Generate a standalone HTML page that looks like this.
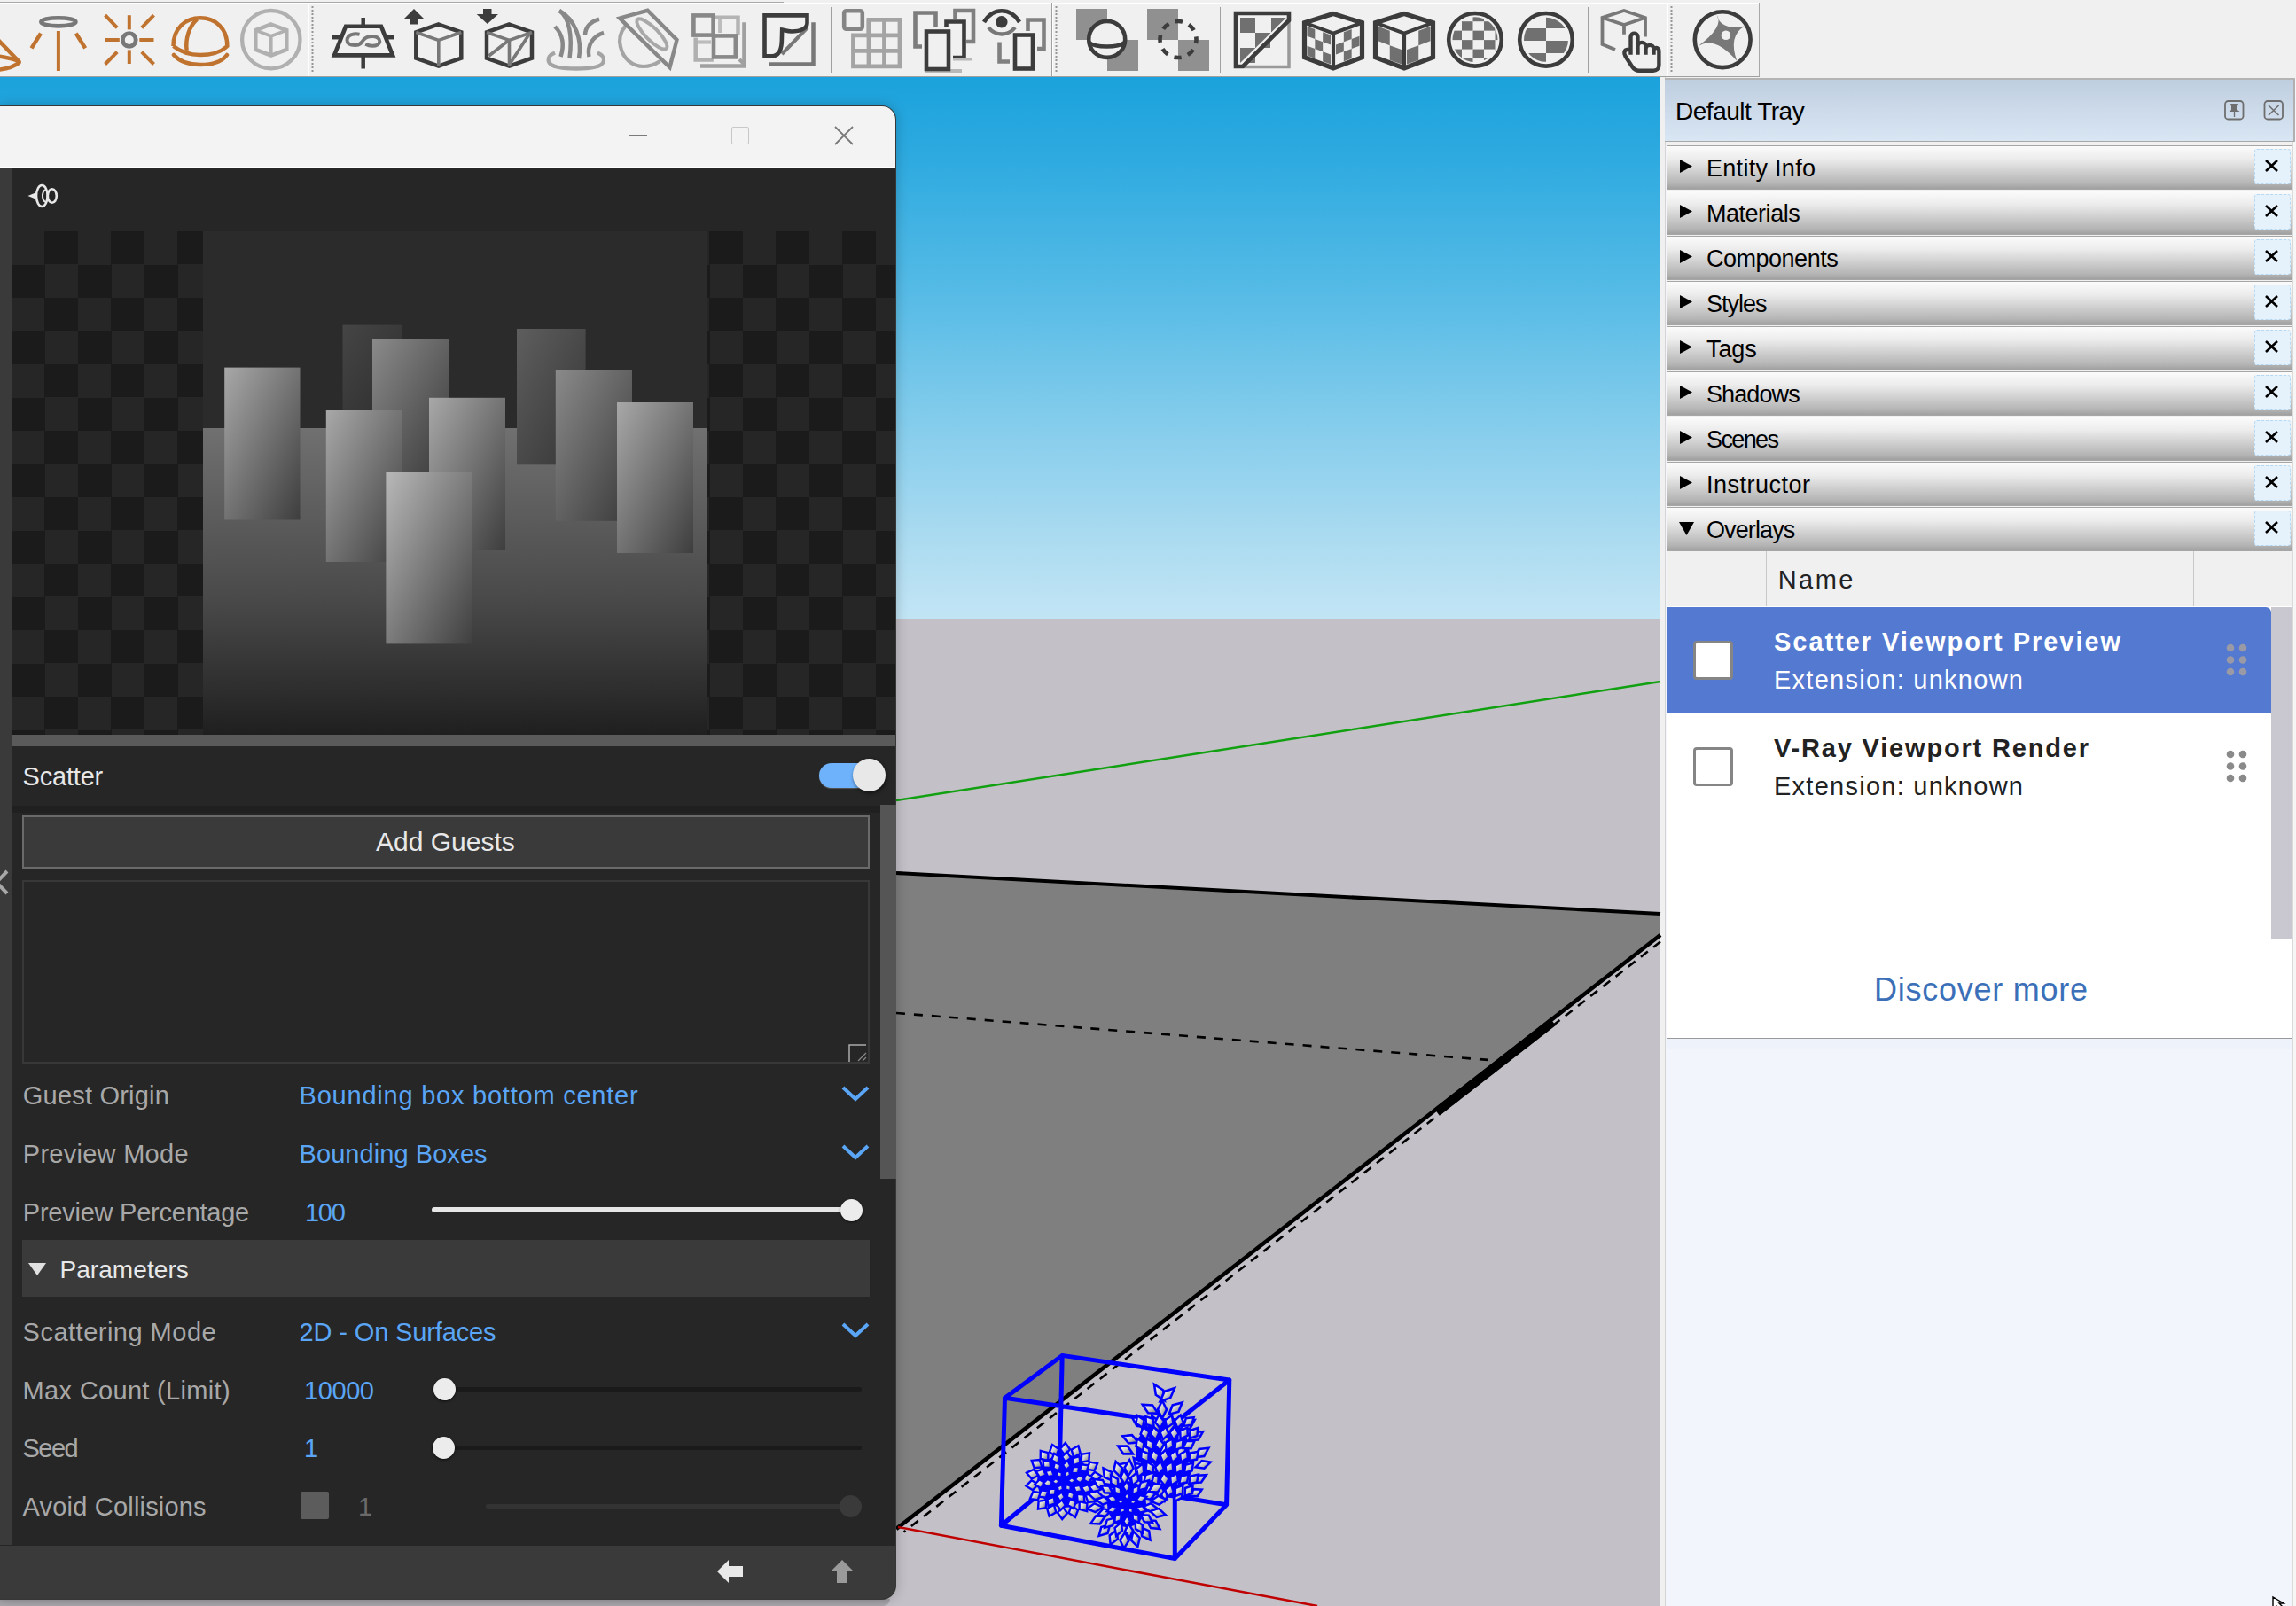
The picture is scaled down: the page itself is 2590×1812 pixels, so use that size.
<!DOCTYPE html><html><head><meta charset="utf-8"><style>
html,body{margin:0;padding:0}
body{width:2590px;height:1812px;overflow:hidden;position:relative;background:#c3c1c7;font-family:"Liberation Sans", sans-serif}
.a{position:absolute;box-sizing:border-box}
.t{position:absolute;white-space:pre;font-family:"Liberation Sans", sans-serif}
svg{position:absolute;overflow:visible}
</style></head><body>
<div class="a" style="left:0px;top:0px;width:2590px;height:87px;background:#f0f0f0"></div>
<svg style="left:0;top:0" width="2590" height="87" viewBox="0 0 2590 87"><rect x="0" y="2" width="884" height="1" fill="#a8a8a8"/><rect x="0" y="3" width="1985" height="1" fill="#ffffff"/><rect x="0" y="86" width="1985" height="1" fill="#a0a0a0"/><rect x="1984" y="3" width="1" height="83" fill="#a8a8a8"/><rect x="347" y="3" width="1" height="83" fill="#a0a0a0"/><rect x="348" y="3" width="1" height="83" fill="#ffffff"/><rect x="937" y="8" width="1" height="74" fill="#a0a0a0"/><rect x="1186" y="3" width="1" height="83" fill="#a0a0a0"/><rect x="1187" y="3" width="1" height="83" fill="#ffffff"/><rect x="1376" y="8" width="1" height="74" fill="#a0a0a0"/><rect x="1791" y="8" width="1" height="74" fill="#a0a0a0"/><rect x="1880" y="3" width="1" height="83" fill="#a0a0a0"/><rect x="1881" y="3" width="1" height="83" fill="#ffffff"/><line x1="352.5" y1="7" x2="352.5" y2="81" stroke="#959595" stroke-width="2" stroke-dasharray="2 2"/><line x1="1191.5" y1="7" x2="1191.5" y2="81" stroke="#959595" stroke-width="2" stroke-dasharray="2 2"/><line x1="1885.5" y1="7" x2="1885.5" y2="81" stroke="#959595" stroke-width="2" stroke-dasharray="2 2"/><line x1="-6" y1="41" x2="21" y2="69" stroke="#c0732f" stroke-width="4.5" stroke-linecap="butt"/><path d="M-4,63 Q26,68 21,71 Q14,77 -4,79" stroke="#c0732f" stroke-width="4.5" fill="none" stroke-linejoin="miter" /><ellipse cx="65.9" cy="24.8" rx="19.6" ry="4.6" stroke="#787878" stroke-width="4.6" fill="none"/><line x1="65.9" y1="35" x2="65.9" y2="80" stroke="#c0732f" stroke-width="4" stroke-linecap="butt"/><line x1="46" y1="37.6" x2="35.5" y2="54.4" stroke="#c0732f" stroke-width="4.5" stroke-linecap="butt"/><line x1="85.7" y1="37.6" x2="96.2" y2="54.4" stroke="#c0732f" stroke-width="4.5" stroke-linecap="butt"/><circle cx="145.8" cy="45" r="7.4" stroke="#787878" stroke-width="4.8" fill="none"/><line x1="145.8" y1="17.2" x2="145.8" y2="33.4" stroke="#c0732f" stroke-width="4" stroke-linecap="butt"/><line x1="145.8" y1="56.4" x2="145.8" y2="72" stroke="#c0732f" stroke-width="4" stroke-linecap="butt"/><line x1="118" y1="45" x2="134.8" y2="45" stroke="#c0732f" stroke-width="4" stroke-linecap="butt"/><line x1="157.3" y1="45" x2="173.5" y2="45" stroke="#c0732f" stroke-width="4" stroke-linecap="butt"/><line x1="118.6" y1="17.2" x2="132.2" y2="31.4" stroke="#c0732f" stroke-width="4" stroke-linecap="butt"/><line x1="173.5" y1="17.2" x2="159.8" y2="31.4" stroke="#c0732f" stroke-width="4" stroke-linecap="butt"/><line x1="118.6" y1="72.5" x2="132.2" y2="58.6" stroke="#c0732f" stroke-width="4" stroke-linecap="butt"/><line x1="173.5" y1="72.5" x2="159.8" y2="58.6" stroke="#c0732f" stroke-width="4" stroke-linecap="butt"/><path d="M195.5,52 C195.5,32 209,20.3 226,20.3 C243,20.3 256.3,32 256.3,52 C248,60 236,62 226,62 C214,62 203,58 195.5,52" stroke="#c0732f" stroke-width="4.5" fill="none" stroke-linejoin="miter" /><path d="M222.3,21.7 C213,30 209,44 210.6,57" stroke="#c0732f" stroke-width="4.5" fill="none" stroke-linejoin="miter" /><path d="M196,62 C203,70 215,73 226,73 C238,73 250,70 256,62" stroke="#c0732f" stroke-width="4.5" fill="none" stroke-linejoin="miter" stroke-linecap="round"/><circle cx="305.8" cy="44.7" r="32.7" stroke="#b0b0b0" stroke-width="4.3" fill="none"/><path d="M305.8,27.5 L323.3,34.15 L323.3,55.85 L305.8,62.5 L288.3,55.85 L288.3,34.15 Z" stroke="#b0b0b0" stroke-width="4.5" fill="none" stroke-linejoin="miter" /><path d="M288.3,34.15 L305.8,40.8 L323.3,34.15 M305.8,40.8 L305.8,62.5" stroke="#b0b0b0" stroke-width="3.6" fill="none" stroke-linejoin="miter" /><path d="M390,29.8 L430,29.8 L443,62.4 L377,62.4 Z" stroke="#3c3c3c" stroke-width="4.6" fill="none" stroke-linejoin="miter" /><line x1="409.7" y1="20" x2="409.7" y2="29" stroke="#3c3c3c" stroke-width="4.5" stroke-linecap="butt"/><line x1="409.7" y1="62" x2="409.7" y2="77.5" stroke="#3c3c3c" stroke-width="4.5" stroke-linecap="butt"/><line x1="375" y1="42.2" x2="384" y2="42.2" stroke="#3c3c3c" stroke-width="4.5" stroke-linecap="butt"/><line x1="436" y1="42.2" x2="445" y2="42.2" stroke="#3c3c3c" stroke-width="4.5" stroke-linecap="butt"/><path d="M405.5,38.7 C400,37.5 391.5,39 391.5,45.5 C391.5,50 396,51 401,51 C406,51 408,48 410,45 C412,42.5 415,41 420,41 C425,41 428.3,43.5 428.3,46.5 C428.3,49.5 425,51.8 420,51.8 C417,51.8 414.5,51 412.3,49.8" stroke="#787878" stroke-width="4" fill="none" stroke-linejoin="miter" /><path d="M455,22 L467,10 L479,22 Z" stroke="#3c3c3c" stroke-width="0" fill="#3c3c3c" stroke-linejoin="miter" /><rect x="462.5" y="21" width="9.5" height="6.5" fill="#3c3c3c"/><path d="M494.8,27.5 L520.3,36.43 L520.3,65.57 L494.8,74.5 L469.3,65.57 L469.3,36.43 Z" stroke="#3c3c3c" stroke-width="4.5" fill="none" stroke-linejoin="miter" /><path d="M469.3,36.43 L494.8,45.36 L520.3,36.43 M494.8,45.36 L494.8,74.5" stroke="#787878" stroke-width="3.6" fill="none" stroke-linejoin="miter" /><path d="M537.7,16 L562,16 L549.8,27 Z" stroke="#3c3c3c" stroke-width="0" fill="#3c3c3c" stroke-linejoin="miter" /><rect x="545" y="10" width="9.5" height="7" fill="#3c3c3c"/><path d="M574.5,27.5 L600.0,36.43 L600.0,65.57 L574.5,74.5 L549.0,65.57 L549.0,36.43 Z" stroke="#3c3c3c" stroke-width="4.5" fill="none" stroke-linejoin="miter" /><path d="M549.0,36.43 L574.5,45.36 L600.0,36.43 M574.5,45.36 L574.5,74.5" stroke="#787878" stroke-width="3.6" fill="none" stroke-linejoin="miter" /><path d="M551.5,63 L574.5,45 M574.5,73 L598,37" stroke="#787878" stroke-width="3.6" fill="none" stroke-linejoin="miter" /><path d="M626,59.5 C615,64 616,73.5 630,76 C640,78 660,78 670,76 C684,73.5 684,64 674,59.5" stroke="#a4a4a4" stroke-width="4.3" fill="none" stroke-linejoin="miter" /><path d="M631,12 C642,20 646,40 642.5,66" stroke="#888" stroke-width="4.5" fill="none" stroke-linejoin="miter" /><path d="M631,12 C649,22 657,45 653,66" stroke="#888" stroke-width="4.5" fill="none" stroke-linejoin="miter" /><path d="M626,30 C634,38 637,50 632.5,64" stroke="#888" stroke-width="4.5" fill="none" stroke-linejoin="miter" /><path d="M676,21.7 C666,24 660,31 660,39.8" stroke="#888" stroke-width="4.5" fill="none" stroke-linejoin="miter" /><path d="M681,37 C668,41 662,52 664.5,64" stroke="#888" stroke-width="4.5" fill="none" stroke-linejoin="miter" /><path d="M705.5,29.4 C699,37 698,45 700,53 C703,66 713,75 726,75 C734,75 740,72 744.5,69" stroke="#a4a4a4" stroke-width="4.2" fill="none" stroke-linejoin="miter" /><path d="M699,20.5 L730.5,11.8 L763.5,45 L755.5,76 Z" stroke="#888" stroke-width="4.4" fill="none" stroke-linejoin="miter" /><ellipse cx="735.4" cy="38.4" rx="23" ry="7" transform="rotate(45 735.4 38.4)" stroke="#a8a8a8" stroke-width="4" fill="none"/><path d="M790,74.5 L839.5,74.5 L839.5,25.2" stroke="#a0a0a0" stroke-width="4.6" fill="none" stroke-linejoin="miter" /><path d="M834,67 L838.5,71.5" stroke="#a0a0a0" stroke-width="4" fill="none" stroke-linejoin="miter" /><path d="M806.9,19.7 L832.5,19.7 L832.5,39.8" stroke="#b4b4b4" stroke-width="4.5" fill="none" stroke-linejoin="miter" /><path d="M812.2,22 L812.2,37" stroke="#bcbcbc" stroke-width="4.2" fill="none" stroke-linejoin="miter" /><path d="M784.7,42.6 L784.7,67.5 L804.8,67.5" stroke="#b0b0b0" stroke-width="4.5" fill="none" stroke-linejoin="miter" /><path d="M787,47.5 L802,47.5" stroke="#bcbcbc" stroke-width="4.2" fill="none" stroke-linejoin="miter" /><rect x="782.4" y="17.4" width="22.2" height="22.2" stroke="#888" stroke-width="4.6" fill="none"/><rect x="805" y="40.4" width="24.8" height="24" stroke="#888" stroke-width="4.6" fill="none"/><path d="M917.5,25.2 L917.5,72.5 L867.6,72.5" stroke="#787878" stroke-width="4.5" fill="none" stroke-linejoin="miter" stroke-linejoin="round"/><path d="M882,61 L911,31" stroke="#787878" stroke-width="4" fill="none" stroke-linejoin="miter" /><path d="M862.5,17.4 L910.5,17.4 L910.5,26 C910.5,32 903,35.5 893,35.5 C888,35.5 885,34 882.2,33.6 L881.8,48 C881,58 877,63.3 871,63.3 L862.5,63.3 Z" stroke="#3c3c3c" stroke-width="4.6" fill="none" stroke-linejoin="miter" /><path d="M979.9,22.4 L1014.9,22.4 L1014.9,74.9 L962.4,74.9 L962.4,39.900000000000006 L979.9,39.900000000000006 Z" stroke="#a4a4a4" stroke-width="4.6" fill="none" stroke-linejoin="miter" stroke-linejoin="round"/><line x1="979.9" y1="22.4" x2="979.9" y2="74.9" stroke="#a4a4a4" stroke-width="4.6" stroke-linecap="butt"/><line x1="997.4" y1="22.4" x2="997.4" y2="74.9" stroke="#a4a4a4" stroke-width="4.6" stroke-linecap="butt"/><line x1="962.4" y1="57.400000000000006" x2="1014.9" y2="57.400000000000006" stroke="#a4a4a4" stroke-width="4.6" stroke-linecap="butt"/><line x1="979.9" y1="39.900000000000006" x2="1014.9" y2="39.900000000000006" stroke="#a4a4a4" stroke-width="4.6" stroke-linecap="butt"/><rect x="952.2" y="12.2" width="20.6" height="20.6" rx="2.5" stroke="#858585" stroke-width="4.6" fill="none"/><path d="M1040,52.5 L1032.5,52.5 L1032.5,14.5 L1055.5,14.5 L1055.5,30" stroke="#7c7c7c" stroke-width="4.6" fill="none" stroke-linejoin="miter" /><path d="M1077.5,21 L1077.5,12 L1098,12 L1098,47 L1090,47" stroke="#808080" stroke-width="4.6" fill="none" stroke-linejoin="miter" /><path d="M1067.5,30 L1067.5,24.5 L1087.5,24.5 L1087.5,65 L1075,65" stroke="#3c3c3c" stroke-width="4.6" fill="none" stroke-linejoin="miter" /><rect x="1075" y="65.5" width="22" height="3" fill="#b8b8b8"/><rect x="1043" y="78" width="42" height="4" fill="#b8b8b8"/><rect x="1045" y="35.5" width="25" height="42.5" stroke="#3c3c3c" stroke-width="4.6" fill="none"/><path d="M1110,25 C1120,8 1140,8 1150,25" stroke="#3c3c3c" stroke-width="4.6" fill="none" stroke-linejoin="miter" /><circle cx="1129.8" cy="24.8" r="6.8" fill="#3c3c3c"/><path d="M1115,31 C1123,41 1137,41 1145,31" stroke="#787878" stroke-width="4.4" fill="none" stroke-linejoin="miter" /><path d="M1159.5,35 L1159.5,22.5 L1177.5,22.5 L1177.5,55 L1170,55" stroke="#808080" stroke-width="4.6" fill="none" stroke-linejoin="miter" /><path d="M1127.5,47.5 L1127.5,69.5 L1139,69.5" stroke="#808080" stroke-width="4.6" fill="none" stroke-linejoin="miter" /><rect x="1145" y="39.5" width="20" height="38" stroke="#3c3c3c" stroke-width="4.6" fill="none"/><rect x="1214" y="10" width="35" height="35" fill="#909090"/><rect x="1249" y="45" width="35" height="35" fill="#909090"/><circle cx="1248.7" cy="44.4" r="20.5" stroke="#3c3c3c" stroke-width="4.6" fill="#f0f0f0"/><path d="M1228.5,48 C1236,54 1261,54 1268.5,48" stroke="#3c3c3c" stroke-width="4.6" fill="none" stroke-linejoin="miter" /><rect x="1294" y="10" width="35" height="35" fill="#909090"/><rect x="1329" y="45" width="35" height="35" fill="#909090"/><circle cx="1329" cy="44.5" r="20.5" stroke="#3c3c3c" stroke-width="4.6" fill="none" stroke-dasharray="8.5 7.6" stroke-dashoffset="4"/><rect x="1399" y="20" width="17" height="17" fill="#707070"/><rect x="1416" y="37" width="17" height="17" fill="#707070"/><rect x="1399" y="54" width="17" height="17" fill="#707070"/><path d="M1434,20 L1451,20 L1434,37 Z" stroke="#707070" stroke-width="0" fill="#707070" stroke-linejoin="miter" /><path d="M1454,24 L1454,75.5 L1403,75.5" stroke="#999" stroke-width="3.5" fill="none" stroke-linejoin="miter" /><path d="M1403,75 L1399,71 L1451,20 L1454,23 Z" stroke="#f0f0f0" stroke-width="0" fill="#f0f0f0" stroke-linejoin="miter" /><path d="M1394,75 L1394,15 L1454,15 L1454,23 L1402,75 Z" stroke="#3c3c3c" stroke-width="4.6" fill="none" stroke-linejoin="miter" /><g><polygon points="1474.5,29.7545 1483.3333333333333,33.013999999999974 1483.3333333333333,44.03149999999997 1474.5,40.772" fill="#707070"/><polygon points="1483.3333333333333,44.03149999999997 1492.1666666666665,47.29099999999994 1492.1666666666665,58.30849999999994 1483.3333333333333,55.04899999999998" fill="#707070"/><polygon points="1474.5,51.789500000000004 1483.3333333333333,55.04899999999998 1483.3333333333333,66.06649999999998 1474.5,62.807" fill="#707070"/><polygon points="1492.1666666666667,36.27350000000003 1501.0,39.533 1501.0,50.5505 1492.1666666666667,47.291000000000025" fill="#707070"/><polygon points="1492.1666666666667,58.30850000000002 1501.0,61.568 1501.0,72.5855 1492.1666666666667,69.32600000000002" fill="#707070"/><polygon points="1515.8333333333333,36.27350000000003 1524.6666666666665,33.01400000000005 1524.6666666666665,44.03150000000005 1515.8333333333333,47.291000000000025" fill="#707070"/><polygon points="1507.0,50.5505 1515.8333333333333,47.291000000000025 1515.8333333333333,58.30850000000002 1507.0,61.568" fill="#707070"/><polygon points="1524.6666666666667,44.03149999999997 1533.5,40.772 1533.5,51.789500000000004 1524.6666666666667,55.04899999999998" fill="#707070"/><polygon points="1515.8333333333333,58.30850000000002 1524.6666666666665,55.04900000000005 1524.6666666666665,66.06650000000005 1515.8333333333333,69.32600000000002" fill="#707070"/><path d="M1504,15.5 L1536.5,25.6475 L1536.5,64.7 L1504,77 L1471.5,64.7 L1471.5,25.6475 Z" stroke="#3c3c3c" stroke-width="5.2" fill="none" stroke-linejoin="miter" /><path d="M1471.5,25.6475 L1504,37.64 L1536.5,25.6475 M1504,37.64 L1504,77" stroke="#3c3c3c" stroke-width="4.16" fill="none" stroke-linejoin="miter" /></g><g><polygon points="1554.5,29.7545 1567.75,34.64375 1567.75,51.17 1554.5,46.28075" fill="#707070"/><polygon points="1567.75,51.17 1581.0,56.059250000000006 1581.0,72.5855 1567.75,67.69624999999999" fill="#707070"/><polygon points="1587.0,56.059250000000006 1600.25,51.17 1600.25,67.69624999999999 1587.0,72.5855" fill="#707070"/><polygon points="1600.25,34.64375 1613.5,29.7545 1613.5,46.28075 1600.25,51.17" fill="#707070"/><path d="M1584,15.5 L1616.5,25.6475 L1616.5,64.7 L1584,77 L1551.5,64.7 L1551.5,25.6475 Z" stroke="#3c3c3c" stroke-width="5.2" fill="none" stroke-linejoin="miter" /><path d="M1551.5,25.6475 L1584,37.64 L1616.5,25.6475 M1584,37.64 L1584,77" stroke="#3c3c3c" stroke-width="4.16" fill="none" stroke-linejoin="miter" /></g><defs><clipPath id="cs1"><circle cx="1664" cy="44.8" r="25.5"/></clipPath><clipPath id="cs2"><circle cx="1744" cy="44.8" r="25"/></clipPath></defs><g clip-path="url(#cs1)"><rect x="1611.5" y="-7.149999999999999" width="12.5" height="10.45" fill="#707070"/><rect x="1611.5" y="13.75" width="12.5" height="10.45" fill="#707070"/><rect x="1611.5" y="34.65" width="12.5" height="10.45" fill="#707070"/><rect x="1611.5" y="55.55" width="12.5" height="10.45" fill="#707070"/><rect x="1611.5" y="76.45" width="12.5" height="10.45" fill="#707070"/><rect x="1624.0" y="3.3000000000000007" width="12.5" height="10.45" fill="#707070"/><rect x="1624.0" y="24.2" width="12.5" height="10.45" fill="#707070"/><rect x="1624.0" y="45.099999999999994" width="12.5" height="10.45" fill="#707070"/><rect x="1624.0" y="66.0" width="12.5" height="10.45" fill="#707070"/><rect x="1636.5" y="-7.149999999999999" width="12.5" height="10.45" fill="#707070"/><rect x="1636.5" y="13.75" width="12.5" height="10.45" fill="#707070"/><rect x="1636.5" y="34.65" width="12.5" height="10.45" fill="#707070"/><rect x="1636.5" y="55.55" width="12.5" height="10.45" fill="#707070"/><rect x="1636.5" y="76.45" width="12.5" height="10.45" fill="#707070"/><rect x="1649.0" y="3.3000000000000007" width="12.5" height="10.45" fill="#707070"/><rect x="1649.0" y="24.2" width="12.5" height="10.45" fill="#707070"/><rect x="1649.0" y="45.099999999999994" width="12.5" height="10.45" fill="#707070"/><rect x="1649.0" y="66.0" width="12.5" height="10.45" fill="#707070"/><rect x="1661.5" y="-7.149999999999999" width="12.5" height="10.45" fill="#707070"/><rect x="1661.5" y="13.75" width="12.5" height="10.45" fill="#707070"/><rect x="1661.5" y="34.65" width="12.5" height="10.45" fill="#707070"/><rect x="1661.5" y="55.55" width="12.5" height="10.45" fill="#707070"/><rect x="1661.5" y="76.45" width="12.5" height="10.45" fill="#707070"/><rect x="1674.0" y="3.3000000000000007" width="12.5" height="10.45" fill="#707070"/><rect x="1674.0" y="24.2" width="12.5" height="10.45" fill="#707070"/><rect x="1674.0" y="45.099999999999994" width="12.5" height="10.45" fill="#707070"/><rect x="1674.0" y="66.0" width="12.5" height="10.45" fill="#707070"/><rect x="1686.5" y="-7.149999999999999" width="12.5" height="10.45" fill="#707070"/><rect x="1686.5" y="13.75" width="12.5" height="10.45" fill="#707070"/><rect x="1686.5" y="34.65" width="12.5" height="10.45" fill="#707070"/><rect x="1686.5" y="55.55" width="12.5" height="10.45" fill="#707070"/><rect x="1686.5" y="76.45" width="12.5" height="10.45" fill="#707070"/><rect x="1699.0" y="3.3000000000000007" width="12.5" height="10.45" fill="#707070"/><rect x="1699.0" y="24.2" width="12.5" height="10.45" fill="#707070"/><rect x="1699.0" y="45.099999999999994" width="12.5" height="10.45" fill="#707070"/><rect x="1699.0" y="66.0" width="12.5" height="10.45" fill="#707070"/></g><g clip-path="url(#cs2)"><rect x="1744" y="18" width="30" height="14" fill="#707070"/><rect x="1716" y="32" width="28" height="14" fill="#707070"/><rect x="1744" y="46" width="30" height="14" fill="#707070"/><rect x="1716" y="60" width="28" height="14" fill="#707070"/></g><circle cx="1664" cy="44.8" r="29.8" stroke="#3c3c3c" stroke-width="4.6" fill="none"/><circle cx="1744" cy="44.8" r="29.8" stroke="#3c3c3c" stroke-width="4.6" fill="none"/><path d="M1822,56 L1807.5,50 L1807.5,20 L1832,12 L1856,20 L1856,41.5 M1807.5,20 L1832,28 L1856,20 M1832,28 L1832,38.8" stroke="#787878" stroke-width="3.8" fill="none" stroke-linejoin="miter" /><path d="M1839.5,61.7 L1839.5,41.5 C1839.5,36.5 1847.5,36.5 1847.5,41.5 L1847.5,61.7 M1847.5,52 C1847.5,46.5 1856.5,46.5 1856.5,52 L1856.5,61.7 M1856.5,55 C1856.5,49.5 1865.5,49.5 1865.5,55 L1865.5,61.7 M1865.5,57.5 C1865.5,52.5 1871.4,53 1871.4,57.5 L1871.4,74 C1871.4,77.5 1868.5,79.8 1865,79.8 L1849,79.8 C1845.5,79.8 1843,78 1841,75 L1833.5,63.5 C1831.5,60 1832,56.5 1835.5,56 L1839.5,56" stroke="#3c3c3c" stroke-width="4.4" fill="none" stroke-linejoin="miter" /><circle cx="1943.2" cy="44.7" r="31.4" stroke="#3c3c3c" stroke-width="4.6" fill="none"/><path d="M1936.6,16.6 Q1940.7,35 1968,29.4 Q1949.2,40.4 1959.3,68.7 Q1934,39.6 1915.4,52.2 Q1945.4,30.2 1936.6,16.6 Z" stroke="#787878" stroke-width="0" fill="#787878" stroke-linejoin="miter" /><circle cx="1946.9" cy="39.8" r="5.3" fill="#f0f0f0"/></svg>
<div class="a" style="left:0px;top:87px;width:1873px;height:611px;background:linear-gradient(#1ba2dc 0%,#2eaae0 15%,#56bbe6 40%,#86cdec 65%,#b0ddf1 88%,#c2e5f5 100%)"></div>
<div class="a" style="left:0px;top:698px;width:1873px;height:1114px;background:#c3c1c7"></div>
<div class="a" style="left:1873px;top:87px;width:5px;height:1725px;background:#f0f0f0"></div>
<div class="a" style="left:1878px;top:87px;width:1px;height:1725px;background:#d4d4d4"></div>
<svg style="left:0;top:0" width="2590" height="1812" viewBox="0 0 2590 1812"><polygon points="1011,985 1873,1031 1873,1055 1011,1725" fill="#7f7f7f"/><line x1="1011" y1="903" x2="1873" y2="769" stroke="#10a010" stroke-width="2.5"/><line x1="1011" y1="985" x2="1873" y2="1031" stroke="#000" stroke-width="4"/><line x1="1873" y1="1055" x2="1011" y2="1725" stroke="#000" stroke-width="4.6"/><line x1="1620.8" y1="1254.8" x2="1751.8" y2="1153" stroke="#000" stroke-width="10"/><line x1="1011" y1="1143" x2="1680" y2="1196" stroke="#000" stroke-width="2.6" stroke-dasharray="10 10"/><line x1="1873" y1="1062.5" x2="1019.6" y2="1728.5" stroke="#000" stroke-width="2.6" stroke-dasharray="10 8"/><line x1="1013" y1="1723" x2="1486" y2="1812" stroke="#c00000" stroke-width="2.5"/><path d="M1133.5,1577.2 L1198.2,1529.4 M1198.2,1529.4 L1386.8,1557 M1386.8,1557 L1325.3,1605.5 M1325.3,1605.5 L1133.5,1577.2 M1129.4,1721.3 L1195,1667 M1195,1667 L1383.6,1697.8 M1383.6,1697.8 L1325.3,1758.5 M1325.3,1758.5 L1129.4,1721.3 M1133.5,1577.2 L1129.4,1721.3 M1198.2,1529.4 L1195,1667 M1386.8,1557 L1383.6,1697.8 M1325.3,1605.5 L1325.3,1758.5 " stroke="#0000ff" stroke-width="5" stroke-linecap="round" fill="none"/><defs><linearGradient id="sc" x1="0" y1="0" x2="1" y2="1"><stop offset="0" stop-color="#ffffff"/><stop offset="0.45" stop-color="#d4d4d4"/><stop offset="1" stop-color="#666"/></linearGradient></defs><ellipse cx="1200" cy="1671" rx="30" ry="30" fill="#0000ff"/><polygon points="1242.0,1680.3 1234.0,1684.1 1228.3,1677.3 1236.3,1673.4" fill="url(#sc)" stroke="#0000ff" stroke-width="2.4" stroke-linejoin="miter"/><polygon points="1236.3,1694.1 1227.4,1695.0 1224.5,1686.6 1233.3,1685.7" fill="url(#sc)" stroke="#0000ff" stroke-width="2.4" stroke-linejoin="miter"/><polygon points="1226.2,1705.1 1217.6,1702.9 1217.7,1694.0 1226.3,1696.2" fill="url(#sc)" stroke="#0000ff" stroke-width="2.4" stroke-linejoin="miter"/><polygon points="1213.0,1712.0 1205.6,1707.0 1208.7,1698.7 1216.1,1703.7" fill="url(#sc)" stroke="#0000ff" stroke-width="2.4" stroke-linejoin="miter"/><polygon points="1198.2,1714.0 1193.0,1706.7 1198.8,1700.0 1204.0,1707.2" fill="url(#sc)" stroke="#0000ff" stroke-width="2.4" stroke-linejoin="miter"/><polygon points="1183.6,1710.7 1181.2,1702.2 1188.9,1697.8 1191.3,1706.4" fill="url(#sc)" stroke="#0000ff" stroke-width="2.4" stroke-linejoin="miter"/><polygon points="1171.0,1702.7 1171.6,1693.8 1180.4,1692.4 1179.8,1701.3" fill="url(#sc)" stroke="#0000ff" stroke-width="2.4" stroke-linejoin="miter"/><polygon points="1161.9,1690.9 1165.5,1682.8 1174.3,1684.4 1170.6,1692.5" fill="url(#sc)" stroke="#0000ff" stroke-width="2.4" stroke-linejoin="miter"/><polygon points="1157.4,1676.6 1163.6,1670.3 1171.3,1674.8 1165.0,1681.2" fill="url(#sc)" stroke="#0000ff" stroke-width="2.4" stroke-linejoin="miter"/><polygon points="1158.0,1661.7 1166.0,1657.9 1171.7,1664.7 1163.7,1668.6" fill="url(#sc)" stroke="#0000ff" stroke-width="2.4" stroke-linejoin="miter"/><polygon points="1163.7,1647.9 1172.6,1647.0 1175.5,1655.4 1166.7,1656.3" fill="url(#sc)" stroke="#0000ff" stroke-width="2.4" stroke-linejoin="miter"/><polygon points="1173.8,1636.9 1182.4,1639.1 1182.3,1648.0 1173.7,1645.8" fill="url(#sc)" stroke="#0000ff" stroke-width="2.4" stroke-linejoin="miter"/><polygon points="1187.0,1630.0 1194.4,1635.0 1191.3,1643.3 1183.9,1638.3" fill="url(#sc)" stroke="#0000ff" stroke-width="2.4" stroke-linejoin="miter"/><polygon points="1201.8,1628.0 1207.0,1635.3 1201.2,1642.0 1196.0,1634.8" fill="url(#sc)" stroke="#0000ff" stroke-width="2.4" stroke-linejoin="miter"/><polygon points="1216.4,1631.3 1218.8,1639.8 1211.1,1644.2 1208.7,1635.6" fill="url(#sc)" stroke="#0000ff" stroke-width="2.4" stroke-linejoin="miter"/><polygon points="1229.0,1639.3 1228.4,1648.2 1219.6,1649.6 1220.2,1640.7" fill="url(#sc)" stroke="#0000ff" stroke-width="2.4" stroke-linejoin="miter"/><polygon points="1238.1,1651.1 1234.5,1659.2 1225.7,1657.6 1229.4,1649.5" fill="url(#sc)" stroke="#0000ff" stroke-width="2.4" stroke-linejoin="miter"/><polygon points="1242.6,1665.4 1236.4,1671.7 1228.7,1667.2 1235.0,1660.8" fill="url(#sc)" stroke="#0000ff" stroke-width="2.4" stroke-linejoin="miter"/><polygon points="1231.2,1681.8 1223.9,1684.5 1219.8,1677.9 1227.2,1675.1" fill="url(#sc)" stroke="#0000ff" stroke-width="2.4" stroke-linejoin="miter"/><polygon points="1223.4,1694.2 1215.6,1693.6 1214.9,1685.8 1222.7,1686.5" fill="url(#sc)" stroke="#0000ff" stroke-width="2.4" stroke-linejoin="miter"/><polygon points="1211.0,1702.1 1204.3,1698.1 1207.0,1690.8 1213.7,1694.8" fill="url(#sc)" stroke="#0000ff" stroke-width="2.4" stroke-linejoin="miter"/><polygon points="1196.4,1703.8 1192.1,1697.3 1197.7,1691.9 1202.0,1698.4" fill="url(#sc)" stroke="#0000ff" stroke-width="2.4" stroke-linejoin="miter"/><polygon points="1182.5,1699.0 1181.5,1691.3 1188.9,1688.8 1190.0,1696.6" fill="url(#sc)" stroke="#0000ff" stroke-width="2.4" stroke-linejoin="miter"/><polygon points="1172.1,1688.7 1174.5,1681.2 1182.3,1682.2 1179.9,1689.7" fill="url(#sc)" stroke="#0000ff" stroke-width="2.4" stroke-linejoin="miter"/><polygon points="1167.2,1674.8 1172.6,1669.2 1179.1,1673.4 1173.8,1679.1" fill="url(#sc)" stroke="#0000ff" stroke-width="2.4" stroke-linejoin="miter"/><polygon points="1168.8,1660.2 1176.1,1657.5 1180.2,1664.1 1172.8,1666.9" fill="url(#sc)" stroke="#0000ff" stroke-width="2.4" stroke-linejoin="miter"/><polygon points="1176.6,1647.8 1184.4,1648.4 1185.1,1656.2 1177.3,1655.5" fill="url(#sc)" stroke="#0000ff" stroke-width="2.4" stroke-linejoin="miter"/><polygon points="1189.0,1639.9 1195.7,1643.9 1193.0,1651.2 1186.3,1647.2" fill="url(#sc)" stroke="#0000ff" stroke-width="2.4" stroke-linejoin="miter"/><polygon points="1203.6,1638.2 1207.9,1644.7 1202.3,1650.1 1198.0,1643.6" fill="url(#sc)" stroke="#0000ff" stroke-width="2.4" stroke-linejoin="miter"/><polygon points="1217.5,1643.0 1218.5,1650.7 1211.1,1653.2 1210.0,1645.4" fill="url(#sc)" stroke="#0000ff" stroke-width="2.4" stroke-linejoin="miter"/><polygon points="1227.9,1653.3 1225.5,1660.8 1217.7,1659.8 1220.1,1652.3" fill="url(#sc)" stroke="#0000ff" stroke-width="2.4" stroke-linejoin="miter"/><polygon points="1232.8,1667.2 1227.4,1672.8 1220.9,1668.6 1226.2,1662.9" fill="url(#sc)" stroke="#0000ff" stroke-width="2.4" stroke-linejoin="miter"/><polygon points="1220.6,1682.3 1213.6,1683.6 1211.0,1677.0 1218.0,1675.7" fill="url(#sc)" stroke="#0000ff" stroke-width="2.4" stroke-linejoin="miter"/><polygon points="1210.1,1692.2 1203.6,1689.2 1205.4,1682.3 1211.8,1685.3" fill="url(#sc)" stroke="#0000ff" stroke-width="2.4" stroke-linejoin="miter"/><polygon points="1195.7,1694.1 1192.3,1687.9 1197.7,1683.3 1201.1,1689.5" fill="url(#sc)" stroke="#0000ff" stroke-width="2.4" stroke-linejoin="miter"/><polygon points="1182.9,1687.1 1183.8,1680.1 1190.9,1679.6 1190.0,1686.6" fill="url(#sc)" stroke="#0000ff" stroke-width="2.4" stroke-linejoin="miter"/><polygon points="1176.7,1674.0 1181.6,1668.8 1187.6,1672.6 1182.7,1677.8" fill="url(#sc)" stroke="#0000ff" stroke-width="2.4" stroke-linejoin="miter"/><polygon points="1179.4,1659.7 1186.4,1658.4 1189.0,1665.0 1182.0,1666.3" fill="url(#sc)" stroke="#0000ff" stroke-width="2.4" stroke-linejoin="miter"/><polygon points="1189.9,1649.8 1196.4,1652.8 1194.6,1659.7 1188.2,1656.7" fill="url(#sc)" stroke="#0000ff" stroke-width="2.4" stroke-linejoin="miter"/><polygon points="1204.3,1647.9 1207.7,1654.1 1202.3,1658.7 1198.9,1652.5" fill="url(#sc)" stroke="#0000ff" stroke-width="2.4" stroke-linejoin="miter"/><polygon points="1217.1,1654.9 1216.2,1661.9 1209.1,1662.4 1210.0,1655.4" fill="url(#sc)" stroke="#0000ff" stroke-width="2.4" stroke-linejoin="miter"/><polygon points="1223.3,1668.0 1218.4,1673.2 1212.4,1669.4 1217.3,1664.2" fill="url(#sc)" stroke="#0000ff" stroke-width="2.4" stroke-linejoin="miter"/><polygon points="1207.4,1682.3 1202.0,1680.4 1202.5,1674.8 1207.9,1676.6" fill="url(#sc)" stroke="#0000ff" stroke-width="2.4" stroke-linejoin="miter"/><polygon points="1194.0,1683.1 1192.8,1677.5 1198.0,1675.0 1199.1,1680.6" fill="url(#sc)" stroke="#0000ff" stroke-width="2.4" stroke-linejoin="miter"/><polygon points="1186.5,1671.8 1190.8,1668.0 1195.5,1671.3 1191.2,1675.0" fill="url(#sc)" stroke="#0000ff" stroke-width="2.4" stroke-linejoin="miter"/><polygon points="1192.6,1659.7 1198.0,1661.6 1197.5,1667.2 1192.1,1665.4" fill="url(#sc)" stroke="#0000ff" stroke-width="2.4" stroke-linejoin="miter"/><polygon points="1206.0,1658.9 1207.2,1664.5 1202.0,1667.0 1200.9,1661.4" fill="url(#sc)" stroke="#0000ff" stroke-width="2.4" stroke-linejoin="miter"/><polygon points="1213.5,1670.2 1209.2,1674.0 1204.5,1670.7 1208.8,1667.0" fill="url(#sc)" stroke="#0000ff" stroke-width="2.4" stroke-linejoin="miter"/><path d="M1302,1600 L1325,1600 L1340,1625 L1345,1660 L1330,1685 L1295,1685 L1280,1660 L1282,1625 Z" fill="#0000ff"/><polygon points="1302.0,1561.9 1312.2,1568.4 1313.9,1580.4 1303.8,1573.8" fill="url(#sc)" stroke="#0000ff" stroke-width="2.6" stroke-linejoin="miter"/><polygon points="1325.0,1566.2 1320.2,1577.3 1308.7,1581.0 1313.5,1569.9" fill="url(#sc)" stroke="#0000ff" stroke-width="2.6" stroke-linejoin="miter"/><polygon points="1288.9,1584.9 1300.1,1585.5 1306.3,1594.9 1295.1,1594.2" fill="url(#sc)" stroke="#0000ff" stroke-width="2.6" stroke-linejoin="miter"/><polygon points="1311.1,1580.3 1316.0,1590.4 1310.9,1600.3 1306.0,1590.2" fill="url(#sc)" stroke="#0000ff" stroke-width="2.6" stroke-linejoin="miter"/><polygon points="1333.6,1582.5 1329.4,1592.9 1318.6,1595.7 1322.7,1585.4" fill="url(#sc)" stroke="#0000ff" stroke-width="2.6" stroke-linejoin="miter"/><polygon points="1276.9,1599.0 1288.0,1600.5 1293.4,1610.3 1282.3,1608.8" fill="url(#sc)" stroke="#0000ff" stroke-width="2.6" stroke-linejoin="miter"/><polygon points="1299.3,1597.5 1308.2,1604.3 1308.1,1615.4 1299.2,1608.7" fill="url(#sc)" stroke="#0000ff" stroke-width="2.6" stroke-linejoin="miter"/><polygon points="1322.0,1597.7 1324.9,1608.5 1318.0,1617.3 1315.1,1606.5" fill="url(#sc)" stroke="#0000ff" stroke-width="2.6" stroke-linejoin="miter"/><polygon points="1347.6,1602.2 1342.2,1612.0 1331.1,1613.6 1336.5,1603.8" fill="url(#sc)" stroke="#0000ff" stroke-width="2.6" stroke-linejoin="miter"/><polygon points="1266.3,1620.3 1277.0,1619.2 1283.9,1627.4 1273.2,1628.5" fill="url(#sc)" stroke="#0000ff" stroke-width="2.6" stroke-linejoin="miter"/><polygon points="1288.3,1612.5 1297.3,1618.4 1297.6,1629.1 1288.6,1623.2" fill="url(#sc)" stroke="#0000ff" stroke-width="2.6" stroke-linejoin="miter"/><polygon points="1314.3,1614.4 1318.8,1624.2 1313.2,1633.4 1308.8,1623.6" fill="url(#sc)" stroke="#0000ff" stroke-width="2.6" stroke-linejoin="miter"/><polygon points="1337.3,1613.1 1337.2,1623.8 1328.2,1629.8 1328.4,1619.0" fill="url(#sc)" stroke="#0000ff" stroke-width="2.6" stroke-linejoin="miter"/><polygon points="1357.1,1615.2 1351.7,1624.5 1341.0,1625.3 1346.4,1616.0" fill="url(#sc)" stroke="#0000ff" stroke-width="2.6" stroke-linejoin="miter"/><polygon points="1261.2,1631.6 1271.9,1631.6 1278.0,1640.4 1267.3,1640.4" fill="url(#sc)" stroke="#0000ff" stroke-width="2.6" stroke-linejoin="miter"/><polygon points="1286.5,1629.4 1296.0,1634.4 1297.3,1645.0 1287.8,1640.1" fill="url(#sc)" stroke="#0000ff" stroke-width="2.6" stroke-linejoin="miter"/><polygon points="1313.2,1627.8 1318.3,1637.2 1313.3,1646.8 1308.3,1637.3" fill="url(#sc)" stroke="#0000ff" stroke-width="2.6" stroke-linejoin="miter"/><polygon points="1338.3,1628.5 1336.8,1639.1 1327.2,1644.0 1328.7,1633.3" fill="url(#sc)" stroke="#0000ff" stroke-width="2.6" stroke-linejoin="miter"/><polygon points="1363.4,1633.7 1358.3,1643.1 1347.6,1644.3 1352.7,1634.9" fill="url(#sc)" stroke="#0000ff" stroke-width="2.6" stroke-linejoin="miter"/><polygon points="1259.7,1652.8 1269.5,1650.8 1277.1,1657.5 1267.2,1659.5" fill="url(#sc)" stroke="#0000ff" stroke-width="2.6" stroke-linejoin="miter"/><polygon points="1278.8,1645.0 1288.0,1649.2 1290.1,1659.1 1281.0,1654.9" fill="url(#sc)" stroke="#0000ff" stroke-width="2.6" stroke-linejoin="miter"/><polygon points="1298.3,1647.3 1305.4,1654.4 1304.1,1664.3 1296.9,1657.3" fill="url(#sc)" stroke="#0000ff" stroke-width="2.6" stroke-linejoin="miter"/><polygon points="1322.5,1647.1 1324.1,1657.1 1317.0,1664.3 1315.5,1654.3" fill="url(#sc)" stroke="#0000ff" stroke-width="2.6" stroke-linejoin="miter"/><polygon points="1346.2,1646.3 1344.3,1656.2 1335.3,1660.6 1337.2,1650.7" fill="url(#sc)" stroke="#0000ff" stroke-width="2.6" stroke-linejoin="miter"/><polygon points="1365.6,1649.6 1358.5,1656.7 1348.6,1655.3 1355.7,1648.2" fill="url(#sc)" stroke="#0000ff" stroke-width="2.6" stroke-linejoin="miter"/><polygon points="1263.7,1666.8 1273.7,1667.6 1279.1,1676.1 1269.1,1675.3" fill="url(#sc)" stroke="#0000ff" stroke-width="2.6" stroke-linejoin="miter"/><polygon points="1285.6,1660.2 1293.4,1666.5 1293.1,1676.6 1285.2,1670.2" fill="url(#sc)" stroke="#0000ff" stroke-width="2.6" stroke-linejoin="miter"/><polygon points="1311.7,1662.7 1315.9,1671.8 1311.1,1680.7 1306.9,1671.5" fill="url(#sc)" stroke="#0000ff" stroke-width="2.6" stroke-linejoin="miter"/><polygon points="1337.9,1663.2 1335.6,1673.0 1326.5,1677.1 1328.7,1667.3" fill="url(#sc)" stroke="#0000ff" stroke-width="2.6" stroke-linejoin="miter"/><polygon points="1360.7,1664.3 1355.0,1672.6 1345.0,1673.1 1350.7,1664.8" fill="url(#sc)" stroke="#0000ff" stroke-width="2.6" stroke-linejoin="miter"/><polygon points="1266.0,1684.0 1275.0,1682.5 1281.0,1689.5 1272.0,1691.0" fill="url(#sc)" stroke="#0000ff" stroke-width="2.6" stroke-linejoin="miter"/><polygon points="1290.7,1677.9 1299.1,1681.4 1300.5,1690.5 1292.0,1687.0" fill="url(#sc)" stroke="#0000ff" stroke-width="2.6" stroke-linejoin="miter"/><polygon points="1314.0,1677.6 1318.4,1685.7 1313.9,1693.6 1309.4,1685.6" fill="url(#sc)" stroke="#0000ff" stroke-width="2.6" stroke-linejoin="miter"/><polygon points="1333.8,1680.6 1333.1,1689.8 1324.9,1694.0 1325.6,1684.8" fill="url(#sc)" stroke="#0000ff" stroke-width="2.6" stroke-linejoin="miter"/><polygon points="1355.7,1680.6 1350.7,1688.2 1341.5,1687.9 1346.6,1680.2" fill="url(#sc)" stroke="#0000ff" stroke-width="2.6" stroke-linejoin="miter"/><polygon points="1283.1,1597.1 1290.6,1602.1 1288.9,1610.9 1281.4,1605.9" fill="url(#sc)" stroke="#0000ff" stroke-width="2.5" stroke-linejoin="miter"/><polygon points="1292.4,1598.1 1301.0,1601.0 1301.6,1609.9 1293.0,1607.0" fill="url(#sc)" stroke="#0000ff" stroke-width="2.5" stroke-linejoin="miter"/><polygon points="1307.2,1596.5 1313.0,1603.5 1308.8,1611.5 1303.0,1604.5" fill="url(#sc)" stroke="#0000ff" stroke-width="2.5" stroke-linejoin="miter"/><polygon points="1321.8,1597.0 1323.6,1605.8 1316.2,1611.0 1314.4,1602.2" fill="url(#sc)" stroke="#0000ff" stroke-width="2.5" stroke-linejoin="miter"/><polygon points="1331.7,1596.7 1334.9,1605.1 1328.3,1611.3 1325.1,1602.9" fill="url(#sc)" stroke="#0000ff" stroke-width="2.5" stroke-linejoin="miter"/><polygon points="1346.7,1599.1 1344.2,1607.8 1335.3,1608.9 1337.8,1600.2" fill="url(#sc)" stroke="#0000ff" stroke-width="2.5" stroke-linejoin="miter"/><polygon points="1289.7,1609.7 1296.4,1615.8 1293.3,1624.3 1286.6,1618.2" fill="url(#sc)" stroke="#0000ff" stroke-width="2.5" stroke-linejoin="miter"/><polygon points="1301.3,1609.6 1307.4,1616.2 1303.7,1624.4 1297.6,1617.8" fill="url(#sc)" stroke="#0000ff" stroke-width="2.5" stroke-linejoin="miter"/><polygon points="1315.1,1609.7 1318.4,1618.0 1311.9,1624.3 1308.6,1616.0" fill="url(#sc)" stroke="#0000ff" stroke-width="2.5" stroke-linejoin="miter"/><polygon points="1325.1,1609.5 1329.5,1617.4 1323.9,1624.5 1319.5,1616.6" fill="url(#sc)" stroke="#0000ff" stroke-width="2.5" stroke-linejoin="miter"/><polygon points="1339.4,1610.6 1339.8,1619.6 1331.6,1623.4 1331.2,1614.4" fill="url(#sc)" stroke="#0000ff" stroke-width="2.5" stroke-linejoin="miter"/><polygon points="1351.1,1611.0 1350.5,1620.0 1341.9,1623.0 1342.5,1614.0" fill="url(#sc)" stroke="#0000ff" stroke-width="2.5" stroke-linejoin="miter"/><polygon points="1282.8,1623.2 1290.5,1627.9 1289.2,1636.8 1281.5,1632.1" fill="url(#sc)" stroke="#0000ff" stroke-width="2.5" stroke-linejoin="miter"/><polygon points="1293.4,1623.4 1301.4,1627.6 1300.6,1636.6 1292.6,1632.4" fill="url(#sc)" stroke="#0000ff" stroke-width="2.5" stroke-linejoin="miter"/><polygon points="1307.0,1622.6 1313.0,1629.4 1309.0,1637.4 1303.0,1630.6" fill="url(#sc)" stroke="#0000ff" stroke-width="2.5" stroke-linejoin="miter"/><polygon points="1322.4,1623.3 1323.4,1632.3 1315.6,1636.7 1314.6,1627.7" fill="url(#sc)" stroke="#0000ff" stroke-width="2.5" stroke-linejoin="miter"/><polygon points="1334.6,1624.1 1333.9,1633.1 1325.4,1635.9 1326.1,1626.9" fill="url(#sc)" stroke="#0000ff" stroke-width="2.5" stroke-linejoin="miter"/><polygon points="1347.4,1626.0 1343.7,1634.2 1334.6,1634.0 1338.3,1625.8" fill="url(#sc)" stroke="#0000ff" stroke-width="2.5" stroke-linejoin="miter"/><polygon points="1287.6,1636.6 1295.8,1640.4 1295.4,1649.4 1287.2,1645.6" fill="url(#sc)" stroke="#0000ff" stroke-width="2.5" stroke-linejoin="miter"/><polygon points="1300.7,1635.7 1307.4,1641.8 1304.3,1650.3 1297.6,1644.2" fill="url(#sc)" stroke="#0000ff" stroke-width="2.5" stroke-linejoin="miter"/><polygon points="1314.8,1635.6 1318.4,1643.9 1312.2,1650.4 1308.6,1642.1" fill="url(#sc)" stroke="#0000ff" stroke-width="2.5" stroke-linejoin="miter"/><polygon points="1326.7,1635.8 1329.3,1644.5 1322.3,1650.2 1319.7,1641.5" fill="url(#sc)" stroke="#0000ff" stroke-width="2.5" stroke-linejoin="miter"/><polygon points="1338.8,1636.3 1340.0,1645.2 1332.2,1649.7 1331.0,1640.8" fill="url(#sc)" stroke="#0000ff" stroke-width="2.5" stroke-linejoin="miter"/><polygon points="1351.9,1637.8 1350.0,1646.6 1341.1,1648.2 1343.0,1639.4" fill="url(#sc)" stroke="#0000ff" stroke-width="2.5" stroke-linejoin="miter"/><polygon points="1280.3,1651.1 1289.3,1652.2 1291.7,1660.9 1282.7,1659.8" fill="url(#sc)" stroke="#0000ff" stroke-width="2.5" stroke-linejoin="miter"/><polygon points="1293.7,1649.2 1301.5,1653.8 1300.3,1662.8 1292.5,1658.2" fill="url(#sc)" stroke="#0000ff" stroke-width="2.5" stroke-linejoin="miter"/><polygon points="1309.4,1648.6 1312.9,1657.0 1306.6,1663.4 1303.1,1655.0" fill="url(#sc)" stroke="#0000ff" stroke-width="2.5" stroke-linejoin="miter"/><polygon points="1322.3,1649.2 1323.5,1658.2 1315.7,1662.8 1314.5,1653.8" fill="url(#sc)" stroke="#0000ff" stroke-width="2.5" stroke-linejoin="miter"/><polygon points="1333.8,1649.5 1334.3,1658.5 1326.2,1662.5 1325.7,1653.5" fill="url(#sc)" stroke="#0000ff" stroke-width="2.5" stroke-linejoin="miter"/><polygon points="1346.0,1650.4 1344.7,1659.3 1336.0,1661.6 1337.3,1652.7" fill="url(#sc)" stroke="#0000ff" stroke-width="2.5" stroke-linejoin="miter"/><polygon points="1287.2,1662.9 1295.6,1666.1 1295.8,1675.1 1287.4,1671.9" fill="url(#sc)" stroke="#0000ff" stroke-width="2.5" stroke-linejoin="miter"/><polygon points="1299.0,1662.4 1306.9,1666.7 1306.0,1675.6 1298.1,1671.3" fill="url(#sc)" stroke="#0000ff" stroke-width="2.5" stroke-linejoin="miter"/><polygon points="1312.8,1661.5 1318.5,1668.5 1314.2,1676.5 1308.5,1669.5" fill="url(#sc)" stroke="#0000ff" stroke-width="2.5" stroke-linejoin="miter"/><polygon points="1328.0,1662.4 1328.9,1671.3 1321.0,1675.6 1320.1,1666.7" fill="url(#sc)" stroke="#0000ff" stroke-width="2.5" stroke-linejoin="miter"/><polygon points="1340.9,1663.8 1339.0,1672.6 1330.1,1674.2 1332.0,1665.4" fill="url(#sc)" stroke="#0000ff" stroke-width="2.5" stroke-linejoin="miter"/><polygon points="1351.8,1663.7 1350.1,1672.5 1341.2,1674.3 1342.9,1665.5" fill="url(#sc)" stroke="#0000ff" stroke-width="2.5" stroke-linejoin="miter"/><polygon points="1282.5,1675.3 1290.4,1679.7 1289.5,1688.7 1281.6,1684.3" fill="url(#sc)" stroke="#0000ff" stroke-width="2.5" stroke-linejoin="miter"/><polygon points="1295.4,1674.7 1301.9,1681.0 1298.6,1689.3 1292.1,1683.0" fill="url(#sc)" stroke="#0000ff" stroke-width="2.5" stroke-linejoin="miter"/><polygon points="1308.1,1674.5 1313.0,1682.1 1307.9,1689.5 1303.0,1681.9" fill="url(#sc)" stroke="#0000ff" stroke-width="2.5" stroke-linejoin="miter"/><polygon points="1321.0,1674.8 1323.8,1683.4 1317.0,1689.2 1314.2,1680.6" fill="url(#sc)" stroke="#0000ff" stroke-width="2.5" stroke-linejoin="miter"/><polygon points="1334.3,1675.8 1334.1,1684.8 1325.7,1688.2 1325.9,1679.2" fill="url(#sc)" stroke="#0000ff" stroke-width="2.5" stroke-linejoin="miter"/><polygon points="1345.5,1676.0 1345.0,1685.0 1336.5,1688.0 1337.0,1679.0" fill="url(#sc)" stroke="#0000ff" stroke-width="2.5" stroke-linejoin="miter"/><ellipse cx="1271" cy="1697" rx="22" ry="26" fill="#0000ff"/><polygon points="1314.7,1709.2 1304.8,1711.8 1297.3,1704.8 1307.2,1702.1" fill="url(#sc)" stroke="#0000ff" stroke-width="2.5" stroke-linejoin="miter"/><polygon points="1308.4,1725.0 1298.1,1724.1 1293.4,1715.0 1303.7,1715.9" fill="url(#sc)" stroke="#0000ff" stroke-width="2.5" stroke-linejoin="miter"/><polygon points="1297.5,1737.5 1288.1,1733.2 1286.9,1723.0 1296.2,1727.3" fill="url(#sc)" stroke="#0000ff" stroke-width="2.5" stroke-linejoin="miter"/><polygon points="1283.4,1745.1 1276.1,1737.8 1278.4,1727.8 1285.7,1735.1" fill="url(#sc)" stroke="#0000ff" stroke-width="2.5" stroke-linejoin="miter"/><polygon points="1267.8,1746.9 1263.4,1737.6 1269.1,1729.0 1273.4,1738.3" fill="url(#sc)" stroke="#0000ff" stroke-width="2.5" stroke-linejoin="miter"/><polygon points="1252.6,1742.7 1251.7,1732.4 1259.9,1726.2 1260.8,1736.5" fill="url(#sc)" stroke="#0000ff" stroke-width="2.5" stroke-linejoin="miter"/><polygon points="1239.6,1732.9 1242.3,1723.0 1252.1,1720.0 1249.5,1730.0" fill="url(#sc)" stroke="#0000ff" stroke-width="2.5" stroke-linejoin="miter"/><polygon points="1230.4,1718.9 1236.3,1710.4 1246.6,1711.0 1240.7,1719.4" fill="url(#sc)" stroke="#0000ff" stroke-width="2.5" stroke-linejoin="miter"/><polygon points="1226.1,1702.2 1234.6,1696.3 1244.0,1700.3 1235.6,1706.2" fill="url(#sc)" stroke="#0000ff" stroke-width="2.5" stroke-linejoin="miter"/><polygon points="1227.3,1684.8 1237.2,1682.2 1244.7,1689.2 1234.8,1691.9" fill="url(#sc)" stroke="#0000ff" stroke-width="2.5" stroke-linejoin="miter"/><polygon points="1233.6,1669.0 1243.9,1669.9 1248.6,1679.0 1238.3,1678.1" fill="url(#sc)" stroke="#0000ff" stroke-width="2.5" stroke-linejoin="miter"/><polygon points="1244.5,1656.5 1253.9,1660.8 1255.1,1671.0 1245.8,1666.7" fill="url(#sc)" stroke="#0000ff" stroke-width="2.5" stroke-linejoin="miter"/><polygon points="1258.6,1648.9 1265.9,1656.2 1263.6,1666.2 1256.3,1658.9" fill="url(#sc)" stroke="#0000ff" stroke-width="2.5" stroke-linejoin="miter"/><polygon points="1274.2,1647.1 1278.6,1656.4 1272.9,1665.0 1268.6,1655.7" fill="url(#sc)" stroke="#0000ff" stroke-width="2.5" stroke-linejoin="miter"/><polygon points="1289.4,1651.3 1290.3,1661.6 1282.1,1667.8 1281.2,1657.5" fill="url(#sc)" stroke="#0000ff" stroke-width="2.5" stroke-linejoin="miter"/><polygon points="1302.4,1661.1 1299.7,1671.0 1289.9,1674.0 1292.5,1664.0" fill="url(#sc)" stroke="#0000ff" stroke-width="2.5" stroke-linejoin="miter"/><polygon points="1311.6,1675.1 1305.7,1683.6 1295.4,1683.0 1301.3,1674.6" fill="url(#sc)" stroke="#0000ff" stroke-width="2.5" stroke-linejoin="miter"/><polygon points="1315.9,1691.8 1307.4,1697.7 1298.0,1693.7 1306.4,1687.8" fill="url(#sc)" stroke="#0000ff" stroke-width="2.5" stroke-linejoin="miter"/><polygon points="1305.3,1701.8 1296.8,1705.3 1289.5,1699.8 1298.0,1696.3" fill="url(#sc)" stroke="#0000ff" stroke-width="2.5" stroke-linejoin="miter"/><polygon points="1300.0,1717.8 1290.9,1717.2 1286.6,1709.1 1295.8,1709.7" fill="url(#sc)" stroke="#0000ff" stroke-width="2.5" stroke-linejoin="miter"/><polygon points="1289.0,1729.7 1281.0,1725.2 1280.7,1716.0 1288.7,1720.5" fill="url(#sc)" stroke="#0000ff" stroke-width="2.5" stroke-linejoin="miter"/><polygon points="1274.4,1735.1 1269.1,1727.5 1272.8,1719.1 1278.1,1726.7" fill="url(#sc)" stroke="#0000ff" stroke-width="2.5" stroke-linejoin="miter"/><polygon points="1259.1,1732.9 1257.6,1723.9 1264.6,1717.9 1266.1,1726.9" fill="url(#sc)" stroke="#0000ff" stroke-width="2.5" stroke-linejoin="miter"/><polygon points="1246.2,1723.7 1248.8,1714.9 1257.7,1712.5 1255.1,1721.3" fill="url(#sc)" stroke="#0000ff" stroke-width="2.5" stroke-linejoin="miter"/><polygon points="1238.2,1709.1 1244.3,1702.3 1253.4,1704.1 1247.2,1710.9" fill="url(#sc)" stroke="#0000ff" stroke-width="2.5" stroke-linejoin="miter"/><polygon points="1236.7,1692.2 1245.2,1688.7 1252.5,1694.2 1244.0,1697.7" fill="url(#sc)" stroke="#0000ff" stroke-width="2.5" stroke-linejoin="miter"/><polygon points="1242.0,1676.2 1251.1,1676.8 1255.4,1684.9 1246.2,1684.3" fill="url(#sc)" stroke="#0000ff" stroke-width="2.5" stroke-linejoin="miter"/><polygon points="1253.0,1664.3 1261.0,1668.8 1261.3,1678.0 1253.3,1673.5" fill="url(#sc)" stroke="#0000ff" stroke-width="2.5" stroke-linejoin="miter"/><polygon points="1267.6,1658.9 1272.9,1666.5 1269.2,1674.9 1263.9,1667.3" fill="url(#sc)" stroke="#0000ff" stroke-width="2.5" stroke-linejoin="miter"/><polygon points="1282.9,1661.1 1284.4,1670.1 1277.4,1676.1 1275.9,1667.1" fill="url(#sc)" stroke="#0000ff" stroke-width="2.5" stroke-linejoin="miter"/><polygon points="1295.8,1670.3 1293.2,1679.1 1284.3,1681.5 1286.9,1672.7" fill="url(#sc)" stroke="#0000ff" stroke-width="2.5" stroke-linejoin="miter"/><polygon points="1303.8,1684.9 1297.7,1691.7 1288.6,1689.9 1294.8,1683.1" fill="url(#sc)" stroke="#0000ff" stroke-width="2.5" stroke-linejoin="miter"/><polygon points="1293.5,1704.8 1286.1,1706.7 1281.1,1700.9 1288.5,1699.0" fill="url(#sc)" stroke="#0000ff" stroke-width="2.5" stroke-linejoin="miter"/><polygon points="1285.0,1717.8 1278.0,1715.0 1277.3,1707.4 1284.4,1710.2" fill="url(#sc)" stroke="#0000ff" stroke-width="2.5" stroke-linejoin="miter"/><polygon points="1271.2,1722.9 1267.2,1716.5 1271.1,1709.9 1275.2,1716.4" fill="url(#sc)" stroke="#0000ff" stroke-width="2.5" stroke-linejoin="miter"/><polygon points="1257.3,1718.1 1257.8,1710.5 1264.8,1707.5 1264.3,1715.2" fill="url(#sc)" stroke="#0000ff" stroke-width="2.5" stroke-linejoin="miter"/><polygon points="1248.6,1705.2 1253.5,1699.4 1260.9,1701.1 1256.1,1707.0" fill="url(#sc)" stroke="#0000ff" stroke-width="2.5" stroke-linejoin="miter"/><polygon points="1248.5,1689.2 1255.9,1687.3 1260.9,1693.1 1253.5,1695.0" fill="url(#sc)" stroke="#0000ff" stroke-width="2.5" stroke-linejoin="miter"/><polygon points="1257.0,1676.2 1264.0,1679.0 1264.7,1686.6 1257.6,1683.8" fill="url(#sc)" stroke="#0000ff" stroke-width="2.5" stroke-linejoin="miter"/><polygon points="1270.8,1671.1 1274.8,1677.5 1270.9,1684.1 1266.8,1677.6" fill="url(#sc)" stroke="#0000ff" stroke-width="2.5" stroke-linejoin="miter"/><polygon points="1284.7,1675.9 1284.2,1683.5 1277.2,1686.5 1277.7,1678.8" fill="url(#sc)" stroke="#0000ff" stroke-width="2.5" stroke-linejoin="miter"/><polygon points="1293.4,1688.8 1288.5,1694.6 1281.1,1692.9 1285.9,1687.0" fill="url(#sc)" stroke="#0000ff" stroke-width="2.5" stroke-linejoin="miter"/><polygon points="1277.9,1707.8 1272.8,1705.8 1272.8,1700.4 1277.8,1702.4" fill="url(#sc)" stroke="#0000ff" stroke-width="2.5" stroke-linejoin="miter"/><polygon points="1263.6,1707.4 1264.0,1702.0 1269.1,1700.3 1268.8,1705.7" fill="url(#sc)" stroke="#0000ff" stroke-width="2.5" stroke-linejoin="miter"/><polygon points="1259.6,1692.6 1264.8,1691.3 1268.1,1695.6 1262.8,1697.0" fill="url(#sc)" stroke="#0000ff" stroke-width="2.5" stroke-linejoin="miter"/><polygon points="1271.3,1683.9 1274.2,1688.4 1271.1,1692.9 1268.2,1688.3" fill="url(#sc)" stroke="#0000ff" stroke-width="2.5" stroke-linejoin="miter"/><polygon points="1282.6,1693.3 1279.1,1697.4 1274.0,1695.8 1277.4,1691.7" fill="url(#sc)" stroke="#0000ff" stroke-width="2.5" stroke-linejoin="miter"/></svg>
<div class="a" style="left:0px;top:1804px;width:1004px;height:8px;background:linear-gradient(rgba(0,0,0,0.19),rgba(0,0,0,0.13));border-radius:0 0 8px 0"></div>
<div class="a" style="left:0px;top:119px;width:1011px;height:1686px;border-radius:0 16px 16px 0;box-shadow:0 0 14px rgba(0,0,0,0.22)"></div>
<div class="a" style="left:0px;top:119px;width:1011px;height:1686px;border-radius:0 16px 16px 0;overflow:hidden;background:#262626;border:1.5px solid rgba(70,70,70,0.55);border-left:none"></div>
<div class="a" style="left:0px;top:120px;width:1010px;height:68px;background:#f3f3f3;border-radius:0 15px 0 0"></div>
<div class="a" style="left:0px;top:188px;width:1010px;height:1px;background:#ffffff"></div>
<div class="a" style="left:710px;top:152px;width:20px;height:2px;background:#7a7a7a"></div>
<div class="a" style="left:825px;top:143px;width:20px;height:20px;border:1.5px solid #c8c8c8;border-radius:2px"></div>
<svg style="left:940px;top:141px" width="24" height="24" viewBox="0 0 24 24"><path d="M2,2 L22,22 M22,2 L2,22" stroke="#7a7a7a" stroke-width="1.8"/></svg>
<div class="a" style="left:0px;top:189px;width:13px;height:1554px;background:#3a3a3a"></div>
<svg style="left:28px;top:204px" width="40" height="36" viewBox="28 204 40 36"><path d="M31.5,221 L40,217.5 L40,224.5 Z" fill="#e8e8e8"/><ellipse cx="47.3" cy="221" rx="6.3" ry="12" stroke="#e8e8e8" stroke-width="2.6" fill="none"/><path d="M51,214 C47,217 47,225 51,228" stroke="#e8e8e8" stroke-width="2" fill="none"/><ellipse cx="58.8" cy="221" rx="5" ry="7.8" stroke="#e8e8e8" stroke-width="2.6" fill="none"/></svg>
<div class="a" style="left:13px;top:261px;width:997px;height:568px;background:conic-gradient(#1b1b1b 25%,#262626 0 50%,#1b1b1b 0 75%,#262626 0);background-size:75px 75px;background-position:0px 0"></div>
<svg style="left:0;top:0" width="1011" height="900" viewBox="0 0 1011 900"><defs><linearGradient id="gnd" x1="0" y1="0" x2="0" y2="1"><stop offset="0" stop-color="#707070"/><stop offset="0.55" stop-color="#4a4a4a"/><stop offset="0.85" stop-color="#2e2e2e"/><stop offset="1" stop-color="#1f1f1f"/></linearGradient><linearGradient id="bL" x1="0" y1="0" x2="1" y2="1"><stop offset="0" stop-color="#a8a8a8"/><stop offset="1" stop-color="#3e3e3e"/></linearGradient><linearGradient id="bM" x1="0" y1="0" x2="1" y2="1"><stop offset="0" stop-color="#8a8a8a"/><stop offset="1" stop-color="#3a3a3a"/></linearGradient><linearGradient id="bD" x1="0" y1="0" x2="1" y2="1"><stop offset="0" stop-color="#454545"/><stop offset="1" stop-color="#2e2e2e"/></linearGradient><linearGradient id="bDM" x1="0" y1="0" x2="1" y2="1"><stop offset="0" stop-color="#5e5e5e"/><stop offset="1" stop-color="#353535"/></linearGradient><linearGradient id="bB" x1="0" y1="0" x2="1" y2="1"><stop offset="0" stop-color="#b8b8b8"/><stop offset="1" stop-color="#404040"/></linearGradient></defs><rect x="229" y="261" width="568" height="568" fill="#2b2b2b"/><rect x="229" y="483" width="568" height="346" fill="url(#gnd)"/><rect x="386.5" y="366.6" width="67.5" height="97.7" fill="url(#bD)"/><rect x="583" y="371" width="77.6" height="153.3" fill="url(#bDM)"/><rect x="420" y="383" width="86.4" height="150.0" fill="url(#bM)"/><rect x="253.2" y="414.6" width="85.3" height="171.9" fill="url(#bL)"/><rect x="626.8" y="417" width="86.2" height="170.8" fill="url(#bM)"/><rect x="367.8" y="463" width="86.2" height="171.0" fill="url(#bL)"/><rect x="484" y="448.8" width="86.0" height="171.9" fill="url(#bL)"/><rect x="696" y="454" width="86.0" height="170.0" fill="url(#bL)"/><rect x="435.4" y="533" width="96.6" height="193.4" fill="url(#bB)"/></svg>
<div class="a" style="left:13px;top:829px;width:997px;height:13px;background:#5a5a5a"></div>
<div class="t" style="left:25.6px;top:861.5px;font-size:29px;line-height:29px;color:#e8e8e8;letter-spacing:-0.2px;font-weight:400;">Scatter</div>
<div class="a" style="left:924px;top:861px;width:60px;height:28px;border-radius:14px;background:#6fb2fc;box-shadow:0 1px 1px rgba(120,120,120,0.6)"></div>
<div class="a" style="left:961.7px;top:855.9px;width:37.2px;height:37.2px;border-radius:50%;background:#e8e8e8;box-shadow:1px 2px 4px rgba(0,0,0,0.55)"></div>
<div class="a" style="left:13px;top:909px;width:980px;height:8px;background:#202020"></div>
<div class="a" style="left:993px;top:908px;width:18px;height:422px;background:#555555"></div>
<div class="a" style="left:25px;top:920px;width:956px;height:60px;background:#3a3a3a;border:2px solid #6a6a6a"></div>
<div class="t" style="left:424px;top:934.6px;font-size:30px;line-height:30px;color:#e8e8e8;letter-spacing:0px;font-weight:400;">Add Guests</div>
<div class="a" style="left:25px;top:993px;width:956px;height:207px;border:2px solid #383838;background:#262626"></div>
<svg style="left:955px;top:1176px" width="26" height="24" viewBox="0 0 26 24"><path d="M3,22 L3,3 L22,3" stroke="#aaa" stroke-width="1.5" fill="none"/><path d="M13,21 L22,12 M18,21 L22,17" stroke="#888" stroke-width="1.2"/></svg>
<div class="t" style="left:25.8px;top:1221.5px;font-size:29px;line-height:29px;color:#a8a8a8;letter-spacing:0.2px;font-weight:400;">Guest Origin</div>
<div class="t" style="left:337.6px;top:1221.5px;font-size:29px;line-height:29px;color:#5aa5f5;letter-spacing:0.77px;font-weight:400;">Bounding box bottom center</div>
<svg style="left:948px;top:1222px" width="34" height="24" viewBox="0 0 34 24"><path d="M3,5 L17,18 L31,5" stroke="#5aa5f5" stroke-width="4" fill="none"/></svg>
<div class="t" style="left:25.8px;top:1287.5px;font-size:29px;line-height:29px;color:#a8a8a8;letter-spacing:0.27px;font-weight:400;">Preview Mode</div>
<div class="t" style="left:337.6px;top:1287.5px;font-size:29px;line-height:29px;color:#5aa5f5;letter-spacing:0.06px;font-weight:400;">Bounding Boxes</div>
<svg style="left:948px;top:1288px" width="34" height="24" viewBox="0 0 34 24"><path d="M3,5 L17,18 L31,5" stroke="#5aa5f5" stroke-width="4" fill="none"/></svg>
<div class="t" style="left:25.8px;top:1353.5px;font-size:29px;line-height:29px;color:#a8a8a8;letter-spacing:-0.24px;font-weight:400;">Preview Percentage</div>
<div class="t" style="left:344px;top:1353.5px;font-size:29px;line-height:29px;color:#5aa5f5;letter-spacing:-1.3px;font-weight:400;">100</div>
<div class="a" style="left:487px;top:1362px;width:473px;height:6px;background:#e6e6e6;border-radius:3px"></div>
<div class="a" style="left:948px;top:1353px;width:25px;height:25px;border-radius:50%;background:#ececec;box-shadow:0 1px 3px rgba(0,0,0,0.6)"></div>
<div class="a" style="left:25px;top:1399px;width:956px;height:64px;background:#3a3a3a"></div>
<svg style="left:30px;top:1422px" width="26" height="20" viewBox="0 0 26 20"><path d="M2,3 L22,3 L12,17 Z" fill="#e0e0e0"/></svg>
<div class="t" style="left:67.4px;top:1419.3px;font-size:28px;line-height:28px;color:#e8e8e8;letter-spacing:0.08px;font-weight:400;">Parameters</div>
<div class="t" style="left:25.6px;top:1488.5px;font-size:29px;line-height:29px;color:#a8a8a8;letter-spacing:0.49px;font-weight:400;">Scattering Mode</div>
<div class="t" style="left:337.6px;top:1488.5px;font-size:29px;line-height:29px;color:#5aa5f5;letter-spacing:-0.14px;font-weight:400;">2D - On Surfaces</div>
<svg style="left:948px;top:1489px" width="34" height="24" viewBox="0 0 34 24"><path d="M3,5 L17,18 L31,5" stroke="#5aa5f5" stroke-width="4" fill="none"/></svg>
<div class="t" style="left:25.6px;top:1554.5px;font-size:29px;line-height:29px;color:#a8a8a8;letter-spacing:0.32px;font-weight:400;">Max Count (Limit)</div>
<div class="t" style="left:343px;top:1554.5px;font-size:29px;line-height:29px;color:#5aa5f5;letter-spacing:-0.41px;font-weight:400;">10000</div>
<div class="a" style="left:487px;top:1565px;width:485px;height:5px;background:#1a1a1a;border-radius:2px"></div>
<div class="a" style="left:489px;top:1555px;width:25px;height:25px;border-radius:50%;background:#ececec;box-shadow:0 1px 3px rgba(0,0,0,0.7)"></div>
<div class="t" style="left:25.6px;top:1619.5px;font-size:29px;line-height:29px;color:#a8a8a8;letter-spacing:-1.58px;font-weight:400;">Seed</div>
<div class="t" style="left:343px;top:1619.5px;font-size:29px;line-height:29px;color:#5aa5f5;letter-spacing:0px;font-weight:400;">1</div>
<div class="a" style="left:487px;top:1631px;width:485px;height:5px;background:#1a1a1a;border-radius:2px"></div>
<div class="a" style="left:488px;top:1621px;width:25px;height:25px;border-radius:50%;background:#ececec;box-shadow:0 1px 3px rgba(0,0,0,0.7)"></div>
<div class="t" style="left:25.6px;top:1685.5px;font-size:29px;line-height:29px;color:#a8a8a8;letter-spacing:0.19px;font-weight:400;">Avoid Collisions</div>
<div class="a" style="left:338.5px;top:1683px;width:32.5px;height:31px;background:#5c5c5c;border-radius:2px"></div>
<div class="t" style="left:404px;top:1685.5px;font-size:29px;line-height:29px;color:#6a6a6a;letter-spacing:0px;font-weight:400;">1</div>
<div class="a" style="left:548px;top:1697px;width:424px;height:5px;background:#333;border-radius:2px"></div>
<div class="a" style="left:947px;top:1687px;width:25px;height:25px;border-radius:50%;background:#3a3a3a"></div>
<div class="a" style="left:0px;top:1744px;width:1010px;height:60px;background:#3a3a3a;border-radius:0 0 15px 0"></div>
<svg style="left:800px;top:1755px" width="180" height="40" viewBox="800 1755 180 40"><path d="M809,1773 L822,1760 L822,1767 L838,1767 L838,1779 L822,1779 L822,1786 Z" fill="#e8e8e8"/><path d="M950,1760 L963,1773 L956,1773 L956,1786 L944,1786 L944,1773 L937,1773 Z" fill="#9a9a9a"/></svg>
<svg style="left:0;top:980px" width="14" height="32" viewBox="0 0 14 32"><path d="M8,3 L-4,15.5 L8,28" stroke="#a8a8a8" stroke-width="4" fill="none"/></svg>
<div class="a" style="left:1879px;top:87px;width:711px;height:1725px;background:#f2f5fc"></div>
<div class="a" style="left:1879px;top:87px;width:711px;height:1px;background:#f0f0f0"></div>
<div class="a" style="left:1878px;top:88px;width:711px;height:72px;background:linear-gradient(#bfcedf,#d9e6f4);border-top:2px solid #b4b4b4;border-bottom:1px solid #a8a8a8;border-right:2px solid #b0b0b0"></div>
<div class="t" style="left:1890px;top:112.3px;font-size:28px;line-height:28px;color:#000;letter-spacing:-0.48px;font-weight:400;">Default Tray</div>
<svg style="left:2505px;top:110px" width="75" height="30" viewBox="2505 110 75 30"><rect x="2510" y="114" width="20.5" height="20.5" rx="3.5" stroke="#6e6e6e" stroke-width="1.8" fill="none"/><path d="M2516,117 L2525,117 L2524,120 L2524,124 L2526.5,126 L2514.5,126 L2517,124 L2517,120 Z" fill="#6e6e6e"/><line x1="2520.5" y1="126" x2="2520.5" y2="132" stroke="#6e6e6e" stroke-width="1.3"/><rect x="2554.5" y="114" width="20.5" height="20.5" rx="3.5" stroke="#6e6e6e" stroke-width="1.8" fill="none"/><path d="M2559,119 L2570.5,130 M2570.5,119 L2559,130" stroke="#6e6e6e" stroke-width="1.6"/></svg>
<div class="a" style="left:1879px;top:160px;width:710px;height:4px;background:#f0f0f0"></div>
<div class="a" style="left:1880px;top:164px;width:706px;height:50px;background:linear-gradient(#fbfbfb 0%,#ececec 30%,#cfcfcf 60%,#b4b4b4 88%,#a0a0a0 100%);border:1px solid #a6a6a6"></div>
<div class="a" style="left:1880px;top:214px;width:706px;height:1px;background:#f0f0f0"></div>
<div class="a" style="left:2543px;top:168px;width:41px;height:40px;background:#e5f1fb;border:1px dashed #b5d9f5;border-radius:3px"></div>
<svg style="left:2554px;top:179px" width="18" height="16" viewBox="0 0 18 16"><path d="M2,2 L15,14 M15,2 L2,14" stroke="#000" stroke-width="2.6"/></svg>
<svg style="left:1890px;top:178px" width="24" height="22" viewBox="0 0 24 22"><path d="M5,2 L19,9.5 L5,17 Z" fill="#000"/></svg>
<div class="t" style="left:1925px;top:177.1px;font-size:27px;line-height:27px;color:#000;letter-spacing:0.29px;font-weight:400;">Entity Info</div>
<div class="a" style="left:1880px;top:215px;width:706px;height:50px;background:linear-gradient(#fbfbfb 0%,#ececec 30%,#cfcfcf 60%,#b4b4b4 88%,#a0a0a0 100%);border:1px solid #a6a6a6"></div>
<div class="a" style="left:1880px;top:265px;width:706px;height:1px;background:#f0f0f0"></div>
<div class="a" style="left:2543px;top:219px;width:41px;height:40px;background:#e5f1fb;border:1px dashed #b5d9f5;border-radius:3px"></div>
<svg style="left:2554px;top:230px" width="18" height="16" viewBox="0 0 18 16"><path d="M2,2 L15,14 M15,2 L2,14" stroke="#000" stroke-width="2.6"/></svg>
<svg style="left:1890px;top:229px" width="24" height="22" viewBox="0 0 24 22"><path d="M5,2 L19,9.5 L5,17 Z" fill="#000"/></svg>
<div class="t" style="left:1925px;top:228.1px;font-size:27px;line-height:27px;color:#000;letter-spacing:-0.48px;font-weight:400;">Materials</div>
<div class="a" style="left:1880px;top:266px;width:706px;height:50px;background:linear-gradient(#fbfbfb 0%,#ececec 30%,#cfcfcf 60%,#b4b4b4 88%,#a0a0a0 100%);border:1px solid #a6a6a6"></div>
<div class="a" style="left:1880px;top:316px;width:706px;height:1px;background:#f0f0f0"></div>
<div class="a" style="left:2543px;top:270px;width:41px;height:40px;background:#e5f1fb;border:1px dashed #b5d9f5;border-radius:3px"></div>
<svg style="left:2554px;top:281px" width="18" height="16" viewBox="0 0 18 16"><path d="M2,2 L15,14 M15,2 L2,14" stroke="#000" stroke-width="2.6"/></svg>
<svg style="left:1890px;top:280px" width="24" height="22" viewBox="0 0 24 22"><path d="M5,2 L19,9.5 L5,17 Z" fill="#000"/></svg>
<div class="t" style="left:1925px;top:279.1px;font-size:27px;line-height:27px;color:#000;letter-spacing:-0.49px;font-weight:400;">Components</div>
<div class="a" style="left:1880px;top:317px;width:706px;height:50px;background:linear-gradient(#fbfbfb 0%,#ececec 30%,#cfcfcf 60%,#b4b4b4 88%,#a0a0a0 100%);border:1px solid #a6a6a6"></div>
<div class="a" style="left:1880px;top:367px;width:706px;height:1px;background:#f0f0f0"></div>
<div class="a" style="left:2543px;top:321px;width:41px;height:40px;background:#e5f1fb;border:1px dashed #b5d9f5;border-radius:3px"></div>
<svg style="left:2554px;top:332px" width="18" height="16" viewBox="0 0 18 16"><path d="M2,2 L15,14 M15,2 L2,14" stroke="#000" stroke-width="2.6"/></svg>
<svg style="left:1890px;top:331px" width="24" height="22" viewBox="0 0 24 22"><path d="M5,2 L19,9.5 L5,17 Z" fill="#000"/></svg>
<div class="t" style="left:1925px;top:330.1px;font-size:27px;line-height:27px;color:#000;letter-spacing:-1.01px;font-weight:400;">Styles</div>
<div class="a" style="left:1880px;top:368px;width:706px;height:50px;background:linear-gradient(#fbfbfb 0%,#ececec 30%,#cfcfcf 60%,#b4b4b4 88%,#a0a0a0 100%);border:1px solid #a6a6a6"></div>
<div class="a" style="left:1880px;top:418px;width:706px;height:1px;background:#f0f0f0"></div>
<div class="a" style="left:2543px;top:372px;width:41px;height:40px;background:#e5f1fb;border:1px dashed #b5d9f5;border-radius:3px"></div>
<svg style="left:2554px;top:383px" width="18" height="16" viewBox="0 0 18 16"><path d="M2,2 L15,14 M15,2 L2,14" stroke="#000" stroke-width="2.6"/></svg>
<svg style="left:1890px;top:382px" width="24" height="22" viewBox="0 0 24 22"><path d="M5,2 L19,9.5 L5,17 Z" fill="#000"/></svg>
<div class="t" style="left:1925px;top:381.1px;font-size:27px;line-height:27px;color:#000;letter-spacing:-0.08px;font-weight:400;">Tags</div>
<div class="a" style="left:1880px;top:419px;width:706px;height:50px;background:linear-gradient(#fbfbfb 0%,#ececec 30%,#cfcfcf 60%,#b4b4b4 88%,#a0a0a0 100%);border:1px solid #a6a6a6"></div>
<div class="a" style="left:1880px;top:469px;width:706px;height:1px;background:#f0f0f0"></div>
<div class="a" style="left:2543px;top:423px;width:41px;height:40px;background:#e5f1fb;border:1px dashed #b5d9f5;border-radius:3px"></div>
<svg style="left:2554px;top:434px" width="18" height="16" viewBox="0 0 18 16"><path d="M2,2 L15,14 M15,2 L2,14" stroke="#000" stroke-width="2.6"/></svg>
<svg style="left:1890px;top:433px" width="24" height="22" viewBox="0 0 24 22"><path d="M5,2 L19,9.5 L5,17 Z" fill="#000"/></svg>
<div class="t" style="left:1925px;top:432.1px;font-size:27px;line-height:27px;color:#000;letter-spacing:-0.9px;font-weight:400;">Shadows</div>
<div class="a" style="left:1880px;top:470px;width:706px;height:50px;background:linear-gradient(#fbfbfb 0%,#ececec 30%,#cfcfcf 60%,#b4b4b4 88%,#a0a0a0 100%);border:1px solid #a6a6a6"></div>
<div class="a" style="left:1880px;top:520px;width:706px;height:1px;background:#f0f0f0"></div>
<div class="a" style="left:2543px;top:474px;width:41px;height:40px;background:#e5f1fb;border:1px dashed #b5d9f5;border-radius:3px"></div>
<svg style="left:2554px;top:485px" width="18" height="16" viewBox="0 0 18 16"><path d="M2,2 L15,14 M15,2 L2,14" stroke="#000" stroke-width="2.6"/></svg>
<svg style="left:1890px;top:484px" width="24" height="22" viewBox="0 0 24 22"><path d="M5,2 L19,9.5 L5,17 Z" fill="#000"/></svg>
<div class="t" style="left:1925px;top:483.1px;font-size:27px;line-height:27px;color:#000;letter-spacing:-1.61px;font-weight:400;">Scenes</div>
<div class="a" style="left:1880px;top:521px;width:706px;height:50px;background:linear-gradient(#fbfbfb 0%,#ececec 30%,#cfcfcf 60%,#b4b4b4 88%,#a0a0a0 100%);border:1px solid #a6a6a6"></div>
<div class="a" style="left:1880px;top:571px;width:706px;height:1px;background:#f0f0f0"></div>
<div class="a" style="left:2543px;top:525px;width:41px;height:40px;background:#e5f1fb;border:1px dashed #b5d9f5;border-radius:3px"></div>
<svg style="left:2554px;top:536px" width="18" height="16" viewBox="0 0 18 16"><path d="M2,2 L15,14 M15,2 L2,14" stroke="#000" stroke-width="2.6"/></svg>
<svg style="left:1890px;top:535px" width="24" height="22" viewBox="0 0 24 22"><path d="M5,2 L19,9.5 L5,17 Z" fill="#000"/></svg>
<div class="t" style="left:1925px;top:534.1px;font-size:27px;line-height:27px;color:#000;letter-spacing:0.49px;font-weight:400;">Instructor</div>
<div class="a" style="left:1880px;top:572px;width:706px;height:50px;background:linear-gradient(#fbfbfb 0%,#ececec 30%,#cfcfcf 60%,#b4b4b4 88%,#a0a0a0 100%);border:1px solid #a6a6a6"></div>
<div class="a" style="left:1880px;top:622px;width:706px;height:1px;background:#f0f0f0"></div>
<div class="a" style="left:2543px;top:576px;width:41px;height:40px;background:#e5f1fb;border:1px dashed #b5d9f5;border-radius:3px"></div>
<svg style="left:2554px;top:587px" width="18" height="16" viewBox="0 0 18 16"><path d="M2,2 L15,14 M15,2 L2,14" stroke="#000" stroke-width="2.6"/></svg>
<svg style="left:1890px;top:586px" width="24" height="22" viewBox="0 0 24 22"><path d="M4,3 L21,3 L12.5,18 Z" fill="#000"/></svg>
<div class="t" style="left:1925px;top:585.1px;font-size:27px;line-height:27px;color:#000;letter-spacing:-0.89px;font-weight:400;">Overlays</div>
<div class="a" style="left:1880px;top:622px;width:706px;height:62px;background:#f0f0f0"></div>
<div class="a" style="left:1992px;top:622px;width:1px;height:62px;background:#c8c8c8"></div>
<div class="a" style="left:2474px;top:622px;width:1px;height:62px;background:#c8c8c8"></div>
<div class="a" style="left:1880px;top:684px;width:706px;height:488px;background:#ffffff"></div>
<div class="t" style="left:2005.7px;top:639.5px;font-size:29px;line-height:29px;color:#222;letter-spacing:2.48px;font-weight:400;">Name</div>
<div class="a" style="left:1880px;top:685px;width:682px;height:120px;background:#5479d1;border-radius:0 6px 0 0"></div>
<div class="a" style="left:2562px;top:685px;width:24px;height:375px;background:#c9c8d0"></div>
<div class="a" style="left:1910px;top:722.5px;width:44.5px;height:44px;background:#fff;border:3.5px solid #858585;border-radius:4px"></div>
<div class="a" style="left:1910px;top:842.8px;width:44.5px;height:44px;background:#fff;border:3.5px solid #858585;border-radius:4px"></div>
<div class="t" style="left:2001px;top:710.3px;font-size:29px;line-height:29px;color:#fff;letter-spacing:1.96px;font-weight:700;">Scatter Viewport Preview</div>
<div class="t" style="left:2001px;top:752.6px;font-size:29px;line-height:29px;color:#fff;letter-spacing:1.26px;font-weight:400;">Extension: unknown</div>
<div class="t" style="left:2001px;top:830.3px;font-size:29px;line-height:29px;color:#222;letter-spacing:1.82px;font-weight:700;">V-Ray Viewport Render</div>
<div class="t" style="left:2001px;top:873.0px;font-size:29px;line-height:29px;color:#222;letter-spacing:1.26px;font-weight:400;">Extension: unknown</div>
<svg style="left:0;top:0" width="2590" height="1000" viewBox="0 0 2590 1000"><circle cx="2516" cy="731.0" r="4.3" fill="#9a9aa6"/><circle cx="2530" cy="731.0" r="4.3" fill="#9a9aa6"/><circle cx="2516" cy="744.5" r="4.3" fill="#9a9aa6"/><circle cx="2530" cy="744.5" r="4.3" fill="#9a9aa6"/><circle cx="2516" cy="758.0" r="4.3" fill="#9a9aa6"/><circle cx="2530" cy="758.0" r="4.3" fill="#9a9aa6"/><circle cx="2516" cy="851.0" r="4.3" fill="#8a8a8a"/><circle cx="2530" cy="851.0" r="4.3" fill="#8a8a8a"/><circle cx="2516" cy="864.5" r="4.3" fill="#8a8a8a"/><circle cx="2530" cy="864.5" r="4.3" fill="#8a8a8a"/><circle cx="2516" cy="878.0" r="4.3" fill="#8a8a8a"/><circle cx="2530" cy="878.0" r="4.3" fill="#8a8a8a"/></svg>
<div class="t" style="left:2114px;top:1098.5px;font-size:36px;line-height:36px;color:#3b70b9;letter-spacing:0.74px;font-weight:400;">Discover more</div>
<div class="a" style="left:1880px;top:1171px;width:706px;height:13px;background:#eef2fa;border:1.5px solid #999"></div>
<div class="a" style="left:2586px;top:160px;width:4px;height:1652px;background:#f6f6f6;border-left:1.5px solid #dadada"></div>
<svg style="left:2562px;top:1800px" width="20" height="14" viewBox="0 0 20 14"><path d="M2,2 L2,16 L6,12 L10,16 L13,13 L9,9 L14,9 Z" stroke="#000" stroke-width="1.4" fill="#fff"/></svg>
</body></html>
